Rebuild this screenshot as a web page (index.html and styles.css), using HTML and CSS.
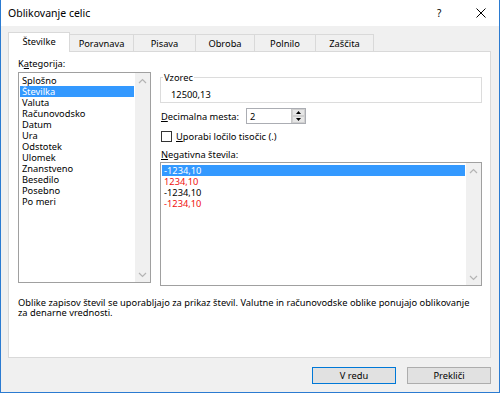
FILE: index.html
```html
<!DOCTYPE html>
<html lang="sl">
<head>
<meta charset="utf-8">
<title>Oblikovanje celic</title>
<link rel="stylesheet" href="styles.css">
</head>
<body>
<div class="window">
  <div class="titlebar">
    <span class="title">Oblikovanje celic</span>
    <span class="help">?</span>
    <span class="close"><svg width="10" height="10" viewBox="0 0 10 10"><path d="M0.5 0.5L9.5 9.5M9.5 0.5L0.5 9.5" stroke="#000" stroke-width="1" fill="none"/></svg></span>
  </div>
  <div class="client">
    <div class="tabs">
      <div class="tab active t1">Številke</div>
      <div class="tab t2">Poravnava</div>
      <div class="tab t3">Pisava</div>
      <div class="tab t4">Obroba</div>
      <div class="tab t5">Polnilo</div>
      <div class="tab t6">Zaščita</div>
    </div>
    <div class="panel">
      <div class="cols">
        <div class="left">
          <div class="label">K<u>a</u>tegorija:</div>
          <div class="listbox cat">
            <div class="items">
              <div class="item">Splošno</div>
              <div class="item sel">Številka</div>
              <div class="item">Valuta</div>
              <div class="item">Računovodsko</div>
              <div class="item">Datum</div>
              <div class="item">Ura</div>
              <div class="item">Odstotek</div>
              <div class="item">Ulomek</div>
              <div class="item">Znanstveno</div>
              <div class="item">Besedilo</div>
              <div class="item">Posebno</div>
              <div class="item">Po meri</div>
            </div>
            <div class="scrollbar">
              <svg class="arr" width="9" height="6" viewBox="0 0 9 6"><path d="M1 5L4.5 1.5L8 5" stroke="#b4b4b4" stroke-width="1.2" fill="none"/></svg>
              <svg class="arr" width="9" height="6" viewBox="0 0 9 6"><path d="M1 1L4.5 4.5L8 1" stroke="#b4b4b4" stroke-width="1.2" fill="none"/></svg>
            </div>
          </div>
        </div>
        <div class="right">
          <fieldset class="sample">
            <legend>Vzorec</legend>
            <div class="sample-value">12500,13</div>
          </fieldset>
          <div class="dec-row">
            <span class="dec-label"><u>D</u>ecimalna mesta:</span>
            <div class="spin">
              <span class="spin-value">2</span>
              <div class="spin-btns">
                <span class="sbtn"><svg width="5" height="3" viewBox="0 0 5 3"><path d="M0 3L2.5 0L5 3Z" fill="#000"/></svg></span>
                <span class="sbtn"><svg width="5" height="3" viewBox="0 0 5 3"><path d="M0 0L2.5 3L5 0Z" fill="#000"/></svg></span>
              </div>
            </div>
          </div>
          <div class="check-row">
            <span class="checkbox"></span>
            <span><u>U</u>porabi ločilo tisočic (.)</span>
          </div>
          <div class="label neg-label"><u>N</u>egativna števila:</div>
          <div class="listbox neg">
            <div class="items">
              <div class="item sel">-1234,10</div>
              <div class="item red">1234,10</div>
              <div class="item">-1234,10</div>
              <div class="item red">-1234,10</div>
            </div>
            <div class="scrollbar">
              <svg class="arr" width="9" height="6" viewBox="0 0 9 6"><path d="M1 5L4.5 1.5L8 5" stroke="#b4b4b4" stroke-width="1.2" fill="none"/></svg>
              <svg class="arr" width="9" height="6" viewBox="0 0 9 6"><path d="M1 1L4.5 4.5L8 1" stroke="#b4b4b4" stroke-width="1.2" fill="none"/></svg>
            </div>
          </div>
        </div>
      </div>
      <p class="desc">Oblike zapisov števil se uporabljajo za prikaz števil. Valutne in računovodske oblike ponujajo oblikovanje za denarne vrednosti.</p>
    </div>
    <div class="buttons">
      <button class="btn default">V redu</button>
      <button class="btn">Prekliči</button>
    </div>
  </div>
</div>
</body>
</html>
```

FILE: styles.css
```css
* { box-sizing: border-box; }
html, body { margin: 0; padding: 0; background: #fff; }
body {
  font-family: "Noto Sans", "Open Sans", sans-serif;
  font-size: 9.3px;
  color: #000;
}
u { text-decoration: underline; text-underline-offset: 1px; }

.window {
  width: 500px;
  height: 393px;
  border: 1px solid #2b7bd1;
  border-top: none;
  display: flex;
  flex-direction: column;
  background: #f0f0f0;
}

.titlebar {
  height: 26px;
  flex: none;
  background: #fff;
  display: flex;
  align-items: center;
  padding-left: 7px;
}
.title { font-size: 10.5px; flex: 1; }
.help { font-size: 10px; width: 10px; margin-right: 29px; }
.close { width: 10px; height: 10px; margin-right: 13px; display: flex; }

.client {
  flex: 1;
  display: flex;
  flex-direction: column;
  padding: 6px 8px 0 7px;
}

.tabs {
  display: flex;
  height: 19px;
  align-items: flex-end;
  position: relative;
  z-index: 1;
}
.tab {
  height: 17px;
  border: 1px solid #d9d9d9;
  border-bottom: none;
  background: #f0f0f0;
  display: flex;
  align-items: center;
  justify-content: center;
  margin-left: -1px;
}
.tab.active {
  height: 20px;
  margin-bottom: -1px;
  background: #fff;
  margin-left: 0;
  padding-bottom: 2px;
}
.t1 { width: 62px; }
.t2 { width: 64px; margin-left: 0; border-left: none; }
.t3 { width: 63px; }
.t4 { width: 60px; }
.t5 { width: 62px; }
.t6 { width: 59px; }

.panel {
  height: 307px;
  flex: none;
  background: #fff;
  border: 1px solid #d9d9d9;
  padding: 6px 0 0 9px;
}
.cols { display: flex; gap: 9px; }
.left { width: 133px; }
.label { height: 14px; line-height: 11px; }

.listbox {
  border: 1px solid #a0a0a0;
  background: #fff;
  display: flex;
  padding: 1px;
}
.listbox.cat { height: 211px; }
.listbox .items { flex: 1; padding-top: 1px; }
.item { line-height: 11px; height: 11px; padding-left: 2px; white-space: nowrap; }
.item.sel { background: #3399ff; color: #fff; }
.item.red { color: #f01010; }
.scrollbar {
  width: 15px;
  background: #f0f0f0;
  display: flex;
  flex-direction: column;
  justify-content: space-between;
  align-items: center;
  padding: 5px 0 4px;
  margin: -1px -1px -1px 1px;
}

.right { width: 322px; padding-top: 14px; }
.sample {
  margin: 0;
  padding: 0 0 2px 10px;
  border: 1px solid #dcdcdc;
  min-width: 0;
}
.sample legend {
  padding: 0 1px;
  margin-left: -8px;
  line-height: 11px;
}
.sample-value { line-height: 11px; margin-top: 6px; }

.dec-row { display: flex; align-items: center; margin-top: 5px; height: 16px; }
.dec-label { width: 86px; padding-left: 1px; }
.spin {
  width: 60px;
  height: 16px;
  border: 1px solid #abadb3;
  display: flex;
  align-items: center;
  background: #fff;
}
.spin-value { flex: 1; padding-left: 3px; }
.spin-btns {
  width: 14px;
  height: 14px;
  display: flex;
  flex-direction: column;
  border-left: 1px solid #c8c8c8;
}
.sbtn {
  flex: 1;
  background: #e6e6e6;
  border: 1px solid #d0d0d0;
  display: flex;
  align-items: center;
  justify-content: center;
}

.check-row { display: flex; align-items: center; gap: 4px; margin-top: 7px; height: 11px; padding-left: 1px; }
.checkbox { width: 11px; height: 11px; border: 1px solid #333; background: #fff; }

.neg-label { margin-top: 7px; height: 13px; padding-left: 1px; }
.listbox.neg { height: 124px; }

.desc {
  margin: 12px 0 0 0;
  line-height: 10px;
  width: 462px;
}

.buttons {
  display: flex;
  justify-content: flex-end;
  gap: 11px;
  margin-top: 9px;
}
.btn {
  width: 84px;
  height: 17px;
  font: inherit;
  font-size: 9.3px;
  background: #e1e1e1;
  border: 1px solid #adadad;
  padding: 0;
  color: #000;
}
.btn.default { border-color: #0078d7; }
```
